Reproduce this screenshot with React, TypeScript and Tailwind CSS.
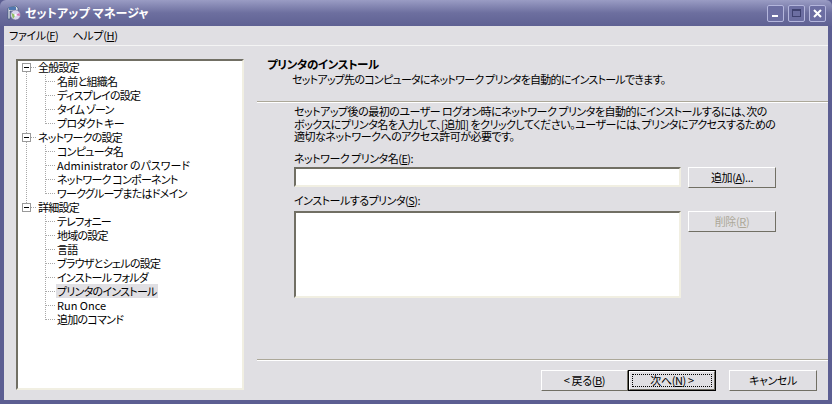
const FONT = "font-['Noto_Sans_CJK_JP','Liberation_Sans',sans-serif] [font-feature-settings:'palt']";

const tree = [
  { name: '全般設定', children: ['名前と組織名', 'ディスプレイの設定', 'タイム ゾーン', 'プロダクト キー'] },
  { name: 'ネットワークの設定', children: ['コンピュータ名', 'Administrator のパスワード', 'ネットワーク コンポーネント', 'ワークグループまたはドメイン'] },
  {
    name: '詳細設定',
    children: ['テレフォニー', '地域の設定', '言語', 'ブラウザとシェルの設定', 'インストール フォルダ', 'プリンタのインストール', 'Run Once', '追加のコマンド'],
  },
];

function AppIcon() {
  return (
    <svg width="16" height="16" viewBox="0 0 16 16" className="shrink-0">
      <path d="M2 3l8-2 2 2v3H4v8H2z" fill="#e4e4ee" stroke="#3d5a7a" strokeWidth="0.7" />
      <rect x="3" y="2" width="7" height="3" fill="#4f78b0" />
      <circle cx="9.5" cy="10" r="5" fill="#d8d4ee" stroke="#6a6a90" strokeWidth="0.6" />
      <path d="M5.5 8l4 2-2.5 4z" fill="#8fc060" />
      <path d="M9.5 10l4-2 .5 3z" fill="#d870b0" />
      <circle cx="9.5" cy="10" r="1.2" fill="#fff" />
    </svg>
  );
}

function CaptionButton({ kind }: { kind: 'min' | 'max' | 'close' }) {
  return (
    <div className="w-[17px] h-[17px] rounded-[2px] border border-[#b4b6dc] bg-[#6c6ea2] flex items-center justify-center">
      {kind === 'min' && <div className="w-[6px] h-[2px] bg-white mt-[6px] -ml-[1px]" />}
      {kind === 'max' && <div className="w-[9px] h-[8px] border border-[#3f4170] border-t-2" />}
      {kind === 'close' && (
        <svg width="9" height="9" viewBox="0 0 9 9">
          <path d="M1 1l7 7M8 1l-7 7" stroke="#fff" strokeWidth="2" />
        </svg>
      )}
    </div>
  );
}

function Expander() {
  return (
    <div className="absolute left-[4px] top-[2px] w-[9px] h-[9px] border border-[#9a9a9a] bg-white flex items-center justify-center">
      <div className="w-[5px] h-px bg-black" />
    </div>
  );
}

function TreeView() {
  return (
    <div className="w-[228px] h-[331px] shrink-0 bg-white border-2 border-t-[#716f64] border-l-[#716f64] border-r-[#f1efe2] border-b-[#f1efe2]">
      <div className="text-[11px] leading-[14px] tracking-[-0.75px] text-black">
        {tree.map((group, gi) => (
          <div key={group.name} className="relative">
            {gi < tree.length - 1 && (
              <div className="absolute left-[8px] top-[11px] bottom-[-2px] border-l border-dotted border-[#a8a8a8]" />
            )}
            <div className="relative h-[14px]">
              <Expander />
              <div className="absolute left-[13px] top-[6px] w-[5px] border-t border-dotted border-[#a8a8a8]" />
              <span className="absolute left-[20px] -top-[1px] whitespace-nowrap">{group.name}</span>
            </div>
            <div className="relative">
              <div className="absolute left-[27px] top-0 bottom-[7px] border-l border-dotted border-[#a8a8a8]" />
              {group.children.map((child) => (
                <div key={child} className="relative h-[14px]">
                  <div className="absolute left-[28px] top-[6px] w-[9px] border-t border-dotted border-[#a8a8a8]" />
                  <span
                    className={`absolute left-[38px] -top-[1px] h-[14px] px-px whitespace-nowrap ${
                      child === 'プリンタのインストール' ? 'bg-[#e0dfe3]' : ''
                    } ${child === 'Run Once' || child.startsWith('Administrator') ? 'tracking-[0px]' : ''}`}
                  >
                    {child}
                  </span>
                </div>
              ))}
            </div>
          </div>
        ))}
      </div>
    </div>
  );
}

function Button({ children, disabled, focused, className = '' }: { children: React.ReactNode; disabled?: boolean; focused?: boolean; className?: string }) {
  return (
    <div className={`h-[21px] shrink-0 ${focused ? 'border border-black' : ''} ${className}`}>
      <div className="h-full border border-t-white border-l-white border-r-[#716f64] border-b-[#716f64] bg-[#e0dfe3] relative flex items-center justify-center text-[11px] leading-none tracking-[-0.4px]">
        {focused && <div className="absolute inset-[2px] border border-dotted border-black" />}
        <span className={disabled ? 'text-[#aca899]' : 'text-black'}>{children}</span>
      </div>
    </div>
  );
}

function Field({ className }: { className: string }) {
  return <div className={`w-[387px] bg-white border-2 border-t-[#716f64] border-l-[#716f64] border-r-[#f1efe2] border-b-[#f1efe2] ${className}`} />;
}

export default function App() {
  return (
    <div className={`w-[832px] h-[404px] overflow-hidden flex flex-col bg-[#5c5e92] ${FONT}`}>
      <div className="h-[26px] shrink-0 rounded-t-[6px] bg-gradient-to-b from-[#9a9cc4] via-[#6d6f9f] to-[#5f6193] flex items-center pl-[6px] pr-[6px]">
        <AppIcon />
        <span className="ml-[3px] text-[12px] font-bold text-white tracking-[0.1px]">セットアップ マネージャ</span>
        <div className="ml-auto flex gap-[4px]">
          <CaptionButton kind="min" />
          <CaptionButton kind="max" />
          <CaptionButton kind="close" />
        </div>
      </div>

      <div className="flex-1 min-h-0 mx-[4px] mb-[4px] flex flex-col bg-[#e0dfe3]">
        <div className="h-[20px] shrink-0 border-b border-[#f4f4f4] flex items-center gap-[14px] pl-[5px] text-[11px] tracking-[-0.3px] text-black">
          <span>ファイル(<u>F</u>)</span>
          <span>ヘルプ(<u>H</u>)</span>
        </div>

        <div className="flex-1 min-h-0 flex pl-[12px] pt-[13px]">
          <TreeView />

          <div className="flex-1 min-w-0 ml-[13px] -mt-[13px] flex flex-col text-[11px] leading-[12px] tracking-[-0.5px] text-black">
            <div className="h-[56px] shrink-0 border-b border-b-[#aca899] shadow-[0_1px_0_#fff] pt-[12px] pl-[10px]">
              <div className="font-bold text-[11.5px] tracking-[-0.4px]">プリンタのインストール</div>
              <div className="pl-[25px] mt-[3px] tracking-[-0.75px]">セットアップ先のコンピュータにネットワーク プリンタを自動的にインストールできます。</div>
            </div>

            <div className="flex-1 min-h-0 pt-[3px] pl-[37px] flex flex-col">
              <div className="whitespace-nowrap leading-[12.5px]">
                <div>セットアップ後の最初のユーザー ログオン時にネットワーク プリンタを自動的にインストールするには、次の</div>
                <div>ボックスにプリンタ名を入力して、[追加] をクリックしてください。ユーザーには、プリンタにアクセスするための</div>
                <div>適切なネットワークへのアクセス許可が必要です。</div>
              </div>
              <div className="mt-[9px]">ネットワーク プリンタ名(<u>E</u>):</div>
              <div className="flex items-start mt-[3px]">
                <Field className="h-[20px]" />
                <Button className="w-[88px] ml-[7px]">追加(<u>A</u>)...</Button>
              </div>
              <div className="mt-[6px]">インストールするプリンタ(<u>S</u>):</div>
              <div className="flex items-start mt-[5px]">
                <Field className="h-[87px]" />
                <Button disabled className="w-[88px] ml-[7px]">削除(<u>R</u>)</Button>
              </div>
            </div>

            <div className="h-[41px] shrink-0 border-t border-t-[#aca899] shadow-[inset_0_1px_0_#fff] flex items-start pt-[10px] pl-[284px]">
              <Button className="w-[87px]">&lt;&nbsp;戻る(<u>B</u>)</Button>
              <Button focused className="w-[88px]">次へ(<u>N</u>)&nbsp;&gt;</Button>
              <Button className="w-[88px] ml-[13px]">キャンセル</Button>
            </div>
          </div>
        </div>
      </div>
    </div>
  );
}
